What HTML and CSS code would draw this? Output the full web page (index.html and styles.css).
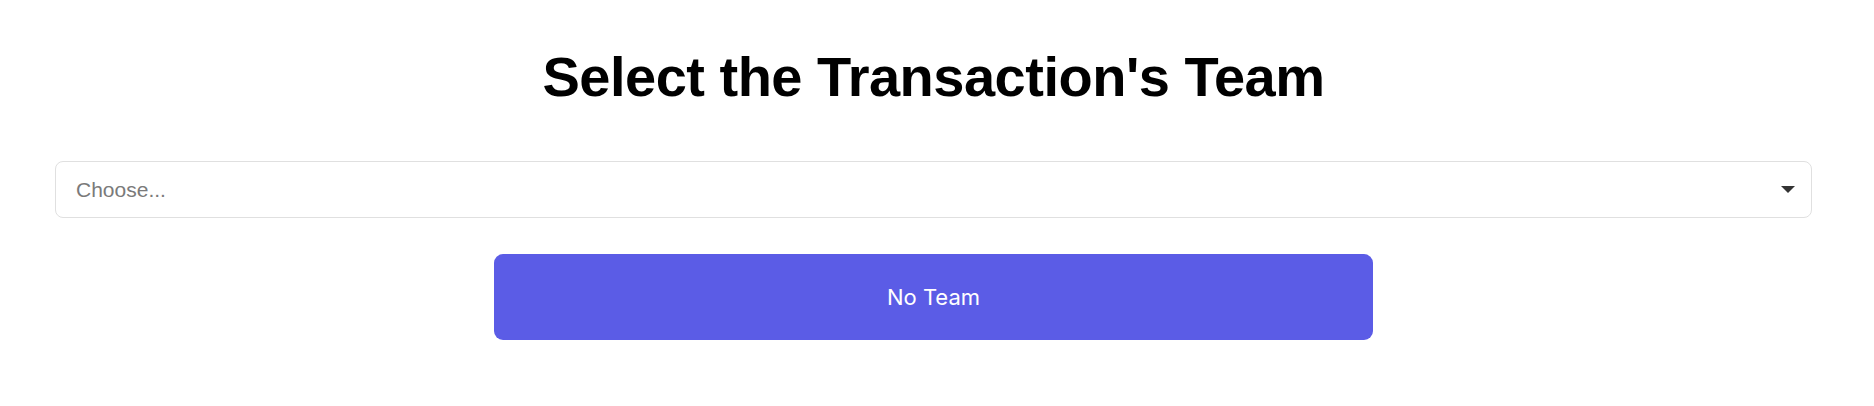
FILE: index.html
```html
<!DOCTYPE html>
<html>
<head>
<meta charset="utf-8">
<link rel="stylesheet" href="styles.css">
</head>
<body>
<main class="page">
  <h1 class="title">Select the Transaction's Team</h1>
  <div class="select-wrap">
    <select class="select">
      <option>Choose...</option>
    </select>
    <svg class="caret" width="14" height="7" viewBox="0 0 14 7"><path d="M0 0 H14 L7 7 Z" fill="#333"/></svg>
  </div>
  <div class="actions">
    <button class="btn">No Team</button>
  </div>
</main>
</body>
</html>
```

FILE: styles.css
```css
html, body {
  margin: 0;
  padding: 0;
  background: #fff;
}
.page {
  padding: 43px 62px 0 55px;
  display: flex;
  flex-direction: column;
}
.title {
  margin: 0;
  font-family: "Liberation Sans", Arial, sans-serif;
  font-weight: 700;
  font-size: 56px;
  line-height: 67px;
  letter-spacing: -0.5px;
  text-align: center;
  color: #000;
}
.select-wrap {
  position: relative;
  margin-top: 51px;
}
.select {
  appearance: none;
  -webkit-appearance: none;
  width: 100%;
  height: 57px;
  box-sizing: border-box;
  border: 1px solid #e0e0e0;
  border-radius: 8px;
  background: #fff;
  padding: 0 20px;
  font-family: "Liberation Sans", Arial, sans-serif;
  font-size: 21px;
  color: #7a7a7a;
  outline: none;
}
.caret {
  position: absolute;
  right: 17px;
  top: 25px;
  pointer-events: none;
}
.actions {
  display: flex;
  justify-content: center;
  margin-top: 36px;
}
.btn {
  width: 50%;
  height: 86px;
  border: none;
  border-radius: 9px;
  background: #5b5ce6;
  color: #fff;
  font-family: Inter, "Noto Sans", sans-serif;
  font-size: 22px;
  font-weight: 400;
  cursor: pointer;
}
```
